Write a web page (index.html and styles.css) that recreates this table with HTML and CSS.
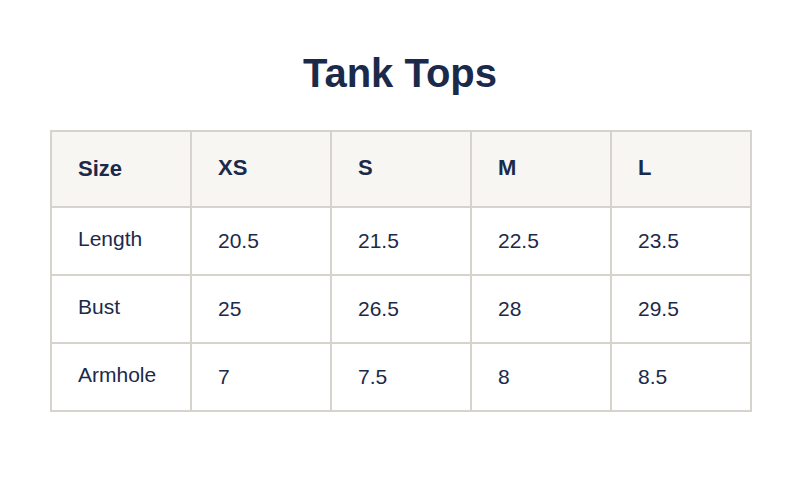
FILE: index.html
```html
<!DOCTYPE html>
<html lang="en">
<head>
<meta charset="utf-8">
<title>Tank Tops</title>
<link rel="stylesheet" href="styles.css">
</head>
<body>
<main class="page">
  <h1 class="title">Tank Tops</h1>
  <table class="size-table">
    <colgroup>
      <col class="col"><col class="col"><col class="col"><col class="col"><col class="col">
    </colgroup>
    <thead>
      <tr>
        <th class="label head-label">Size</th>
        <th>XS</th>
        <th>S</th>
        <th>M</th>
        <th>L</th>
      </tr>
    </thead>
    <tbody>
      <tr>
        <td class="label">Length</td>
        <td>20.5</td>
        <td>21.5</td>
        <td>22.5</td>
        <td>23.5</td>
      </tr>
      <tr>
        <td class="label">Bust</td>
        <td>25</td>
        <td>26.5</td>
        <td>28</td>
        <td>29.5</td>
      </tr>
      <tr>
        <td class="label">Armhole</td>
        <td>7</td>
        <td>7.5</td>
        <td>8</td>
        <td>8.5</td>
      </tr>
    </tbody>
  </table>
</main>
</body>
</html>
```

FILE: styles.css
```css
html, body {
  margin: 0;
  padding: 0;
  background: #ffffff;
}

body {
  font-family: "Liberation Sans", Arial, sans-serif;
  color: #1b2a4a;
}

.page {
  width: 800px;
  height: 480px;
  padding-top: 49px;
  box-sizing: border-box;
}

.title {
  margin: 0;
  font-size: 40px;
  line-height: 48px;
  font-weight: 700;
  text-align: center;
  color: #1b2a4a;
}

.size-table {
  margin: 33px 0 0 50px;
  border-collapse: separate;
  border-spacing: 0;
  table-layout: fixed;
  width: 702px;
  border-top: 2px solid #d6d3cd;
  border-left: 2px solid #d6d3cd;
}

.col {
  width: 140px;
}

.size-table th,
.size-table td {
  box-sizing: border-box;
  border-right: 2px solid #d6d3cd;
  border-bottom: 2px solid #d6d3cd;
  padding: 0 0 0 26px;
  text-align: left;
  vertical-align: middle;
  color: #1b2a4a;
}

.size-table th {
  height: 76px;
  background: #f8f6f2;
  font-size: 22px;
  font-weight: 700;
  padding-bottom: 3px;
}

.size-table th.head-label {
  padding-bottom: 0;
}

.size-table td {
  height: 68px;
  font-size: 21px;
  font-weight: 400;
}

.size-table td.label {
  padding-bottom: 5px;
}
```
